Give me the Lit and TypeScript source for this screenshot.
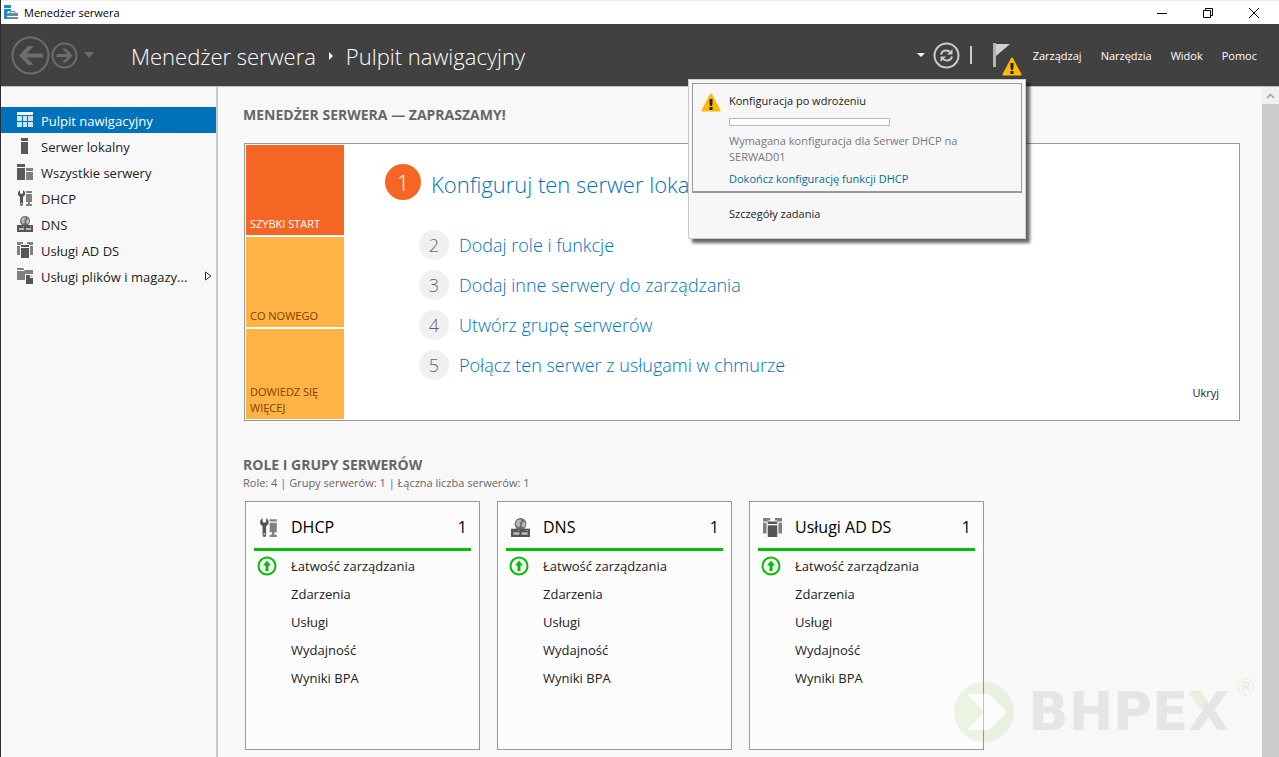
import { LitElement, html, css, svg } from "lit";
import { customElement, property } from "lit/decorators.js";
import { classMap } from "lit/directives/class-map.js";

type IconName = "dashboard" | "server" | "servers" | "dhcp" | "dns" | "adds" | "files";

const ICONS: Record<IconName, unknown> = {
  dashboard: svg`<path fill="#fff" d="M0 0h16v3H0z"/>
    <path fill="#cde4f4" d="M0 4h5v5H0zM6 4h4v5H6zM11 4h5v5h-5zM0 10h5v5H0zM6 10h4v5H6zM11 10h5v5h-5z"/>`,
  server: svg`<path fill="#5a5a5a" d="M4 0h7v3H4zM4 4h7v12H4z"/>`,
  servers: svg`<path fill="#5a5a5a" d="M0 0h8v3H0zM0 4h8v12H0z"/>
    <path fill="#808080" d="M9 4h7v3H9zM9 8h7v8H9z"/>`,
  dhcp: svg`<path fill="#555" d="M1 2v3l2 2v7q0 2 1.500 2T6 14V7l2-2V2L6 0v3L5 4H4L3 3V0z"/>
    <circle cx="4.500" cy="13.500" r=".8" fill="#ddd"/>
    <path fill="#808080" d="M9 1h6v2H9zM9 4h6v8H9zM11 12h2v2h-2zM9 14h6v2H9z"/>`,
  dns: svg`<circle cx="8" cy="5" r="5" fill="#6e6e6e"/>
    <path fill="#b8b8b8" d="M5 2l3-1 1 2-2 1 1 2-2 2-2-3zM10 3l2 1v3l-2 1-1-2z"/>
    <path fill="#555" d="M0 9h16v7H0z"/>
    <path fill="#bdbdbd" d="M2 12h5v2H2zM9 12h5v2H9zM6 10h1v1H6zM13 10h1v1h-1z"/>`,
  adds: svg`<path fill="#808080" d="M0 0h6v2H4v1H0zM10 0h6v3h-4V2h-2zM0 4h3v9H0zM13 4h3v9h-3z"/>
    <path fill="#555" d="M4 3h8v2H4zM4 6h8v10H4z"/>`,
  files: svg`<path fill="#808080" d="M0 0h6l1 1v1H0zM0 3h7l1-1h8v4H8v6H0z"/>
    <path fill="#555" d="M9 7h4v3h3v6H9z"/><path fill="#999" d="M14 7l2 2h-2z"/>`,
};

@customElement("role-icon")
class RoleIcon extends LitElement {
  @property() name: IconName = "server";
  static styles = css`
    :host { display: block; flex: none; width: 16px; height: 16px; }
    svg { display: block; width: 100%; height: 100%; }
  `;
  render() {
    return html`<svg viewBox="0 0 16 16" aria-hidden="true">${ICONS[this.name]}</svg>`;
  }
}

@customElement("warning-icon")
class WarningIcon extends LitElement {
  static styles = css`
    :host { display: block; width: 20px; height: 19px; }
    svg { display: block; width: 100%; height: 100%; }
  `;
  render() {
    return html`<svg viewBox="0 0 20 19" aria-hidden="true">
      <path d="M10 1.500 18.500 17.500H1.500z" fill="#ffb900" stroke="#ffb900" stroke-width="2" stroke-linejoin="round"/>
      <path d="M8.500 6h3v4l-.5 3h-2l-.5-3zM8.500 14h3v3h-3z" fill="#222"/>
    </svg>`;
  }
}

@customElement("role-card")
class RoleCard extends LitElement {
  @property() name = "";
  @property() icon: IconName = "server";
  static styles = css`
    :host { display: block; box-sizing: border-box; min-height: 249px; padding: 8px; background: #fcfcfc; border: 1px solid #999; }
    .head { display: flex; align-items: center; height: 34px; padding: 0 4px 4px 5px; border-bottom: 3px solid #00be00; }
    .head role-icon { width: 19px; height: 19px; }
    h3 { flex: 1; margin: 0 0 0 13px; font-size: 16px; font-weight: 400; color: #000; }
    .count { font-size: 16px; color: #000; }
    ul { margin: 1px 0 0; padding: 0; list-style: none; }
    li { display: flex; align-items: center; height: 28px; padding-left: 3px; }
    .status { flex: none; width: 20px; height: 20px; margin-right: 14px; }
    a { color: #222; font-size: 13px; text-decoration: none; }
  `;
  render() {
    const rows = ["Łatwość zarządzania", "Zdarzenia", "Usługi", "Wydajność", "Wyniki BPA"];
    return html`
      <div class="head">
        <role-icon name=${this.icon}></role-icon>
        <h3>${this.name}</h3>
        <span class="count">1</span>
      </div>
      <ul>
        ${rows.map(
          (row, i) => html`<li>
            <span class="status">${i === 0
              ? html`<svg width="20" height="20" viewBox="0 0 20 20" aria-hidden="true">
                  <circle cx="10" cy="10" r="8.500" fill="#fff" stroke="#00be00" stroke-width="2"/>
                  <path d="M10 4.500 14 9.500h-2.500V15h-3V9.500H6z" fill="#00be00"/>
                </svg>`
              : ""}</span>
            <a href="#">${row}</a>
          </li>`
        )}
      </ul>`;
  }
}

@customElement("app-root")
class AppRoot extends LitElement {
  static styles = css`
    :host {
      position: relative; display: flex; flex-direction: column; box-sizing: border-box;
      height: 100vh; overflow: hidden; border-left: 1px solid #2b2f33; background: #f8f8f8;
      color: #222; font-family: "Open Sans", "Noto Sans", sans-serif; font-size: 11px; line-height: 16px;
    }
    svg { display: block; }
    button { padding: 0; border: 0; background: none; color: inherit; font: inherit; }
    a { color: inherit; text-decoration: none; }
    h1, h2, p, ol, ul { margin: 0; padding: 0; list-style: none; }

    .titlebar { flex: none; display: flex; align-items: center; height: 24px; box-sizing: border-box; padding: 0 19px 0 3px; background: #fff; border-top: 1px solid #eee; color: #000; }
    .titlebar .caption { flex: 1; margin-left: 5px; }
    .window { display: flex; gap: 34px; }

    .toolbar { flex: none; display: flex; align-items: center; height: 62px; padding: 0 22px 0 10px; background: #414141; color: #fff; }
    .history { display: flex; align-items: center; gap: 1px; }
    .history .menu-caret { margin-left: 5px; }
    .crumbs { flex: 1; display: flex; align-items: center; gap: 13px; margin-left: 37px; padding-top: 2px; font-size: 22px; line-height: 32px; font-weight: 300; }
    .crumbs h1 { font: inherit; }
    .tools { display: flex; align-items: center; }
    .refresh { margin: 0 10px 0 8px; }
    .divider { width: 2px; height: 18px; margin-right: 21px; background: #ccc; }
    .flag { position: relative; height: 28px; width: 30px; }
    .flag warning-icon { position: absolute; left: 9px; top: 16px; }
    .menus { display: flex; gap: 19px; margin-left: 10px; padding-top: 2px; }

    .body { flex: 1; display: flex; min-height: 0; border-top: 1px solid #c4c4c4; }
    .sidebar { flex: none; width: 215px; padding-top: 20px; border-right: 2px solid #c8c8c8; }
    .nav { display: flex; align-items: center; height: 26px; padding: 0 4px 0 16px; font-size: 13px; }
    .nav span { flex: 1; margin-left: 8px; padding-top: 2px; white-space: nowrap; }
    .nav.active { background: #0072bc; color: #fff; }

    .main { flex: 1; min-width: 0; overflow: hidden; padding: 18px 22px 0 25px; }
    h2 { font-size: 14px; line-height: 20px; font-weight: 700; color: #666; }
    .welcome { display: flex; margin: 18px 0 0 1px; padding: 1px; border: 1px solid #999; background: #fff; }
    .tiles { display: grid; grid-template-rows: repeat(3, 90px); gap: 2px; width: 98px; }
    .tile { display: flex; align-items: flex-end; padding: 0 16px 3px 4px; background: #ffb344; color: #804000; text-align: left; }
    .tile.quick { background: #f56624; color: #fff; }
    .steps { flex: 1; padding: 19px 0 0 41px; font-weight: 300; color: #0072bc; }
    .steps li { display: flex; align-items: center; gap: 10px; height: 30px; margin: 0 0 10px 34px; font-size: 18px; }
    .steps li.primary { height: 36px; margin: 0 0 30px; font-size: 22px; }
    .primary a { padding-top: 3px; }
    .num { display: grid; place-items: center; width: 30px; height: 30px; border-radius: 50%; background: #f0f0f0; color: #666; }
    .primary .num { width: 36px; height: 36px; background: #f56624; color: #fff; }
    .hide { align-self: flex-end; margin: 0 19px 18px 0; }

    .roles { margin-top: 34px; }
    .summary { color: #666; }
    .cards { display: grid; grid-template-columns: repeat(auto-fill, 235px); gap: 17px; margin: 10px 0 0 2px; }

    .scroll { flex: none; width: 17px; display: flex; flex-direction: column; background: #f0f0f0; }
    .scroll button { display: grid; place-items: center; height: 17px; }
    .thumb { flex: 1; background: #cdcdcd; }

    .notice { position: absolute; top: 79px; right: 253px; width: 338px; height: 160px; box-sizing: border-box; padding: 3px; border: 1px solid #ccc; background: #f7f7f7; box-shadow: 4px 4px 3px rgba(0, 0, 0, 0.6); }
    .task { display: flex; gap: 8px; padding: 9px 46px 4px 8px; border: 1px solid #999; border-bottom-width: 2px; }
    .task warning-icon { flex: none; }
    .task progress { display: block; width: 161px; height: 8px; margin: 9px 0 7px; box-sizing: border-box; appearance: none; border: 1px solid #b8b8b8; background: #fff; }
    .task progress::-webkit-progress-bar { background: #fff; }
    .task p { margin-bottom: 6px; color: #777; }
    .task a { display: block; color: #007096; }
    .details { display: block; margin: 13px 0 0 37px; }

    .watermark { position: absolute; right: 24px; bottom: 14px; display: flex; align-items: center; pointer-events: none; color: #e5e5e5; }
    .brand { position: relative; margin-left: 13px; font: 700 53px/62px "DejaVu Sans", sans-serif; }
    .accent { position: absolute; right: 22px; top: 12px; }
    .reg { align-self: flex-start; margin: -3px 0 0 8px; }
  `;

  private nav: { label: string; icon: IconName; more?: boolean }[] = [
    { label: "Pulpit nawigacyjny", icon: "dashboard" },
    { label: "Serwer lokalny", icon: "server" },
    { label: "Wszystkie serwery", icon: "servers" },
    { label: "DHCP", icon: "dhcp" },
    { label: "DNS", icon: "dns" },
    { label: "Usługi AD DS", icon: "adds" },
    { label: "Usługi plików i magazy...", icon: "files", more: true },
  ];

  private steps = [
    "Konfiguruj ten serwer lokalny",
    "Dodaj role i funkcje",
    "Dodaj inne serwery do zarządzania",
    "Utwórz grupę serwerów",
    "Połącz ten serwer z usługami w chmurze",
  ];

  render() {
    return html`
      <header class="titlebar">
        <svg width="15" height="15" viewBox="0 0 15 15" aria-hidden="true">
          <path fill="#1e8ad6" d="M0 0h7v3H0zM0 4h7v2H4v8H0z"/>
          <path fill="#fff" d="M3 7h12v8H3z"/>
          <path fill="none" stroke="#6d8c9c" d="M6 8V6.500h5V8"/>
          <path fill="#6d8c9c" d="M3 8h11v3H3zM3 12h11v2H3z"/>
        </svg>
        <span class="caption">Menedżer serwera</span>
        <div class="window">
          <button aria-label="Minimalizuj"><svg width="12" height="12" viewBox="0 0 12 12"><path d="M1 6.500h10" stroke="#000"/></svg></button>
          <button aria-label="Przywróć"><svg width="12" height="12" viewBox="0 0 12 12"><path d="M1.500 3.500h7v7h-7zM3.500 3.500v-2h7v7h-2" fill="none" stroke="#000"/></svg></button>
          <button aria-label="Zamknij"><svg width="12" height="12" viewBox="0 0 12 12"><path d="M1 1l10 10M11 1 1 11" stroke="#000"/></svg></button>
        </div>
      </header>

      <div class="toolbar">
        <div class="history">
          <button aria-label="Wstecz"><svg width="39" height="39" viewBox="0 0 39 39">
            <circle cx="19.500" cy="19.500" r="18" fill="none" stroke="#6d6d6d" stroke-width="2"/>
            <path d="M8 19.500 17 10h6l-7.500 7.500H32v4H15.500L23 29h-6z" fill="#6d6d6d"/></svg></button>
          <button aria-label="Dalej"><svg width="27" height="27" viewBox="0 0 27 27">
            <circle cx="13.500" cy="13.500" r="12" fill="none" stroke="#6d6d6d" stroke-width="2"/>
            <path d="M21.500 13.500 15 6.500h-4l5.500 5.500H5.500v3h11L11 20.500h4z" fill="#6d6d6d"/></svg></button>
          <button class="menu-caret" aria-label="Historia"><svg width="10" height="6" viewBox="0 0 10 6"><path d="M0 0h10L5 6z" fill="#6d6d6d"/></svg></button>
        </div>
        <nav class="crumbs">
          <a href="#">Menedżer serwera</a>
          <svg width="4" height="10" viewBox="0 0 4 10" aria-hidden="true"><path d="M0 1 4 5 0 9z" fill="#fff"/></svg>
          <h1>Pulpit nawigacyjny</h1>
        </nav>
        <div class="tools">
          <button aria-label="Opcje odświeżania"><svg width="8" height="4" viewBox="0 0 8 4"><path d="M0 0h8L4 4z" fill="#fff"/></svg></button>
          <button class="refresh" aria-label="Odśwież"><svg width="27" height="27" viewBox="0 0 27 27" fill="none" stroke="#ccc">
            <circle cx="13.500" cy="13.500" r="12" stroke-width="2"/>
            <path d="M8 12.500Q9 8.500 13 8.500q3 0 4.500 2M19 14.500q-1 4-5 4-3 0-4.500-2" stroke-width="2"/>
            <path d="M19.500 7v5.500H14zM7.500 20v-5.500H13z" fill="#ccc" stroke="none"/></svg></button>
          <span class="divider"></span>
          <button class="flag" aria-label="Powiadomienia">
            <svg width="18" height="25" viewBox="0 0 18 25"><path d="M0 0h3v24H0z" fill="#b4b4b4"/><path d="M3 1h14L3 13z" fill="#d0d0d0"/></svg>
            <warning-icon></warning-icon>
          </button>
          <nav class="menus">
            <button>Zarządzaj</button><button>Narzędzia</button><button>Widok</button><button>Pomoc</button>
          </nav>
        </div>
      </div>

      <div class="body">
        <nav class="sidebar">
          ${this.nav.map(
            (item, i) => html`<a href="#" class=${classMap({ nav: true, active: i === 0 })}>
              <role-icon name=${item.icon}></role-icon><span>${item.label}</span>
              ${item.more
                ? html`<svg width="7" height="10" viewBox="0 0 7 10"><path d="M.5 1v8L6 5z" fill="none" stroke="#333"/></svg>`
                : ""}
            </a>`
          )}
        </nav>
        <main class="main">
          <h2>MENEDŻER SERWERA — ZAPRASZAMY!</h2>
          <section class="welcome">
            <div class="tiles">
              <button class="tile quick">SZYBKI START</button>
              <button class="tile">CO NOWEGO</button>
              <button class="tile">DOWIEDZ SIĘ WIĘCEJ</button>
            </div>
            <ol class="steps">
              ${this.steps.map(
                (step, i) => html`<li class=${classMap({ primary: i === 0 })}>
                  <span class="num">${i + 1}</span><a href="#">${step}</a>
                </li>`
              )}
            </ol>
            <button class="hide">Ukryj</button>
          </section>
          <section class="roles">
            <h2>ROLE I GRUPY SERWERÓW</h2>
            <p class="summary">Role: 4 | Grupy serwerów: 1 | Łączna liczba serwerów: 1</p>
            <div class="cards">
              <role-card name="DHCP" icon="dhcp"></role-card>
              <role-card name="DNS" icon="dns"></role-card>
              <role-card name="Usługi AD DS" icon="adds"></role-card>
            </div>
          </section>
        </main>
        <div class="scroll">
          <button aria-label="Przewiń w górę"><svg width="9" height="6" viewBox="0 0 9 6"><path d="M1 5l3.500-3.500L8 5" fill="none" stroke="#999" stroke-width="1.500"/></svg></button>
          <div class="thumb"></div>
        </div>
      </div>

      <aside class="notice">
        <div class="task">
          <warning-icon></warning-icon>
          <div>
            <label for="deploy">Konfiguracja po wdrożeniu</label>
            <progress id="deploy" value="0" max="100"></progress>
            <p>Wymagana konfiguracja dla Serwer DHCP na SERWAD01</p>
            <a href="#">Dokończ konfigurację funkcji DHCP</a>
          </div>
        </div>
        <button class="details">Szczegóły zadania</button>
      </aside>

      <div class="watermark">
        <svg width="62" height="62" viewBox="0 0 62 62" aria-hidden="true">
          <path d="M31 1a30 30 0 1 0 0 60 30 30 0 1 0 0-60zM14 13h22l18 18-18 18H14l17-18z" fill="#8cd050" fill-opacity=".16" fill-rule="evenodd"/>
          <path d="M14 13h22l18 18-18 18H14l17-18z" fill="#fff" fill-opacity=".4"/>
        </svg>
        <span class="brand">BHPEX
          <svg class="accent" width="18" height="16" viewBox="0 0 18 16" aria-hidden="true">
            <path d="M0 0h13l5 8-5 7h-2z" fill="#e6f0dc"/>
          </svg>
        </span>
        <svg class="reg" width="18" height="18" viewBox="0 0 18 18" aria-hidden="true">
          <circle cx="9" cy="9" r="8" fill="none" stroke="#e6f0dc"/>
          <text x="9" y="13" text-anchor="middle" font-family="Liberation Sans" font-size="12" fill="#e0edd4">R</text>
        </svg>
      </div>
    `;
  }
}
